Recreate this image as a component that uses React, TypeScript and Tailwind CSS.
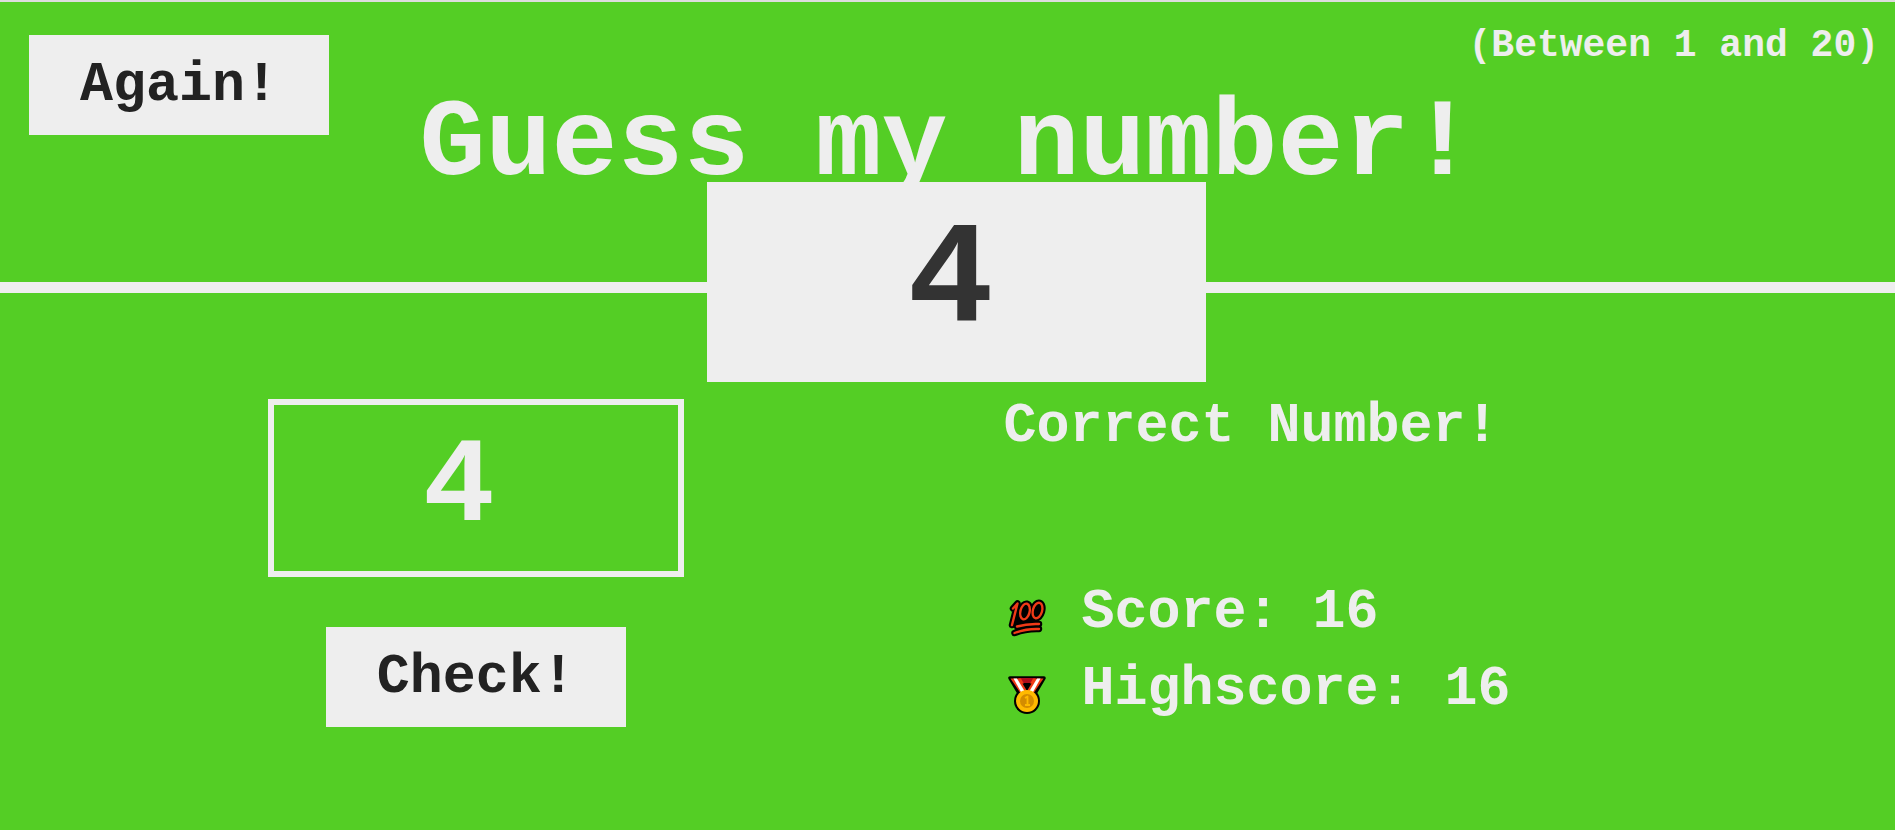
import { useState } from "react";

function HundredIcon() {
  const strokes = (
    <>
      <path d="M5 9.500 9.500 4.500 4 26" />
      <ellipse cx="17" cy="12.500" rx="4.600" ry="8" transform="rotate(14 17 12.500)" />
      <ellipse cx="29.500" cy="11.500" rx="4.600" ry="8" transform="rotate(16 29.500 11.500)" />
      <path d="M9 27.500 Q19 24.500 31 25" />
      <path d="M6.500 34 Q18 29.500 31 30" />
    </>
  );
  return (
    <svg viewBox="0 0 38 38" className="mt-[10px] h-[38px] w-[38px] shrink-0" fill="none" strokeLinecap="round" strokeLinejoin="round" aria-hidden="true">
      <path d="M8 8 28 6 27 24 6 26Z" fill="#000" />
      <g stroke="#000" strokeWidth="6.500" fill="#000">{strokes}</g>
      <g stroke="#f03a17" strokeWidth="2.400">{strokes}</g>
    </svg>
  );
}

function MedalIcon() {
  return (
    <svg viewBox="0 0 38 38" className="mt-[10px] h-[38px] w-[38px] shrink-0" strokeLinejoin="round" aria-hidden="true">
      <path d="M2 2H36L26 19H12Z" fill="#000" stroke="#000" strokeWidth="3.500" />
      <circle cx="19" cy="25" r="13" fill="#000" />
      <path d="M10 2H28L25 7H13Z" fill="#b00e1c" />
      <path d="M2.500 2.500H13L20 15 13 18Z" fill="#f03a17" />
      <path d="M35.500 2.500H25L18 15 25 18Z" fill="#f03a17" />
      <path d="M5.500 2.500H9L16.500 15 13.500 17Z" fill="#fff" />
      <path d="M32.500 2.500H29L21.500 15 24.500 17Z" fill="#fff" />
      <path d="M14.500 7.500H23.500L19 15Z" fill="#000" />
      <circle cx="19" cy="25" r="11" fill="#ffb900" />
      <circle cx="19" cy="25" r="7" fill="#d48c00" />
      <path d="M17 22 19.500 20.500V29M17 29H22" fill="none" stroke="#ffb900" strokeWidth="1.800" />
    </svg>
  );
}

const buttonClass =
  "h-[100px] w-[300px] cursor-pointer bg-[#eee] text-center text-[55px] leading-[55px] text-[#222] hover:bg-[#ccc]";

export default function App() {
  const [guess, setGuess] = useState("4");

  return (
    <div className="min-h-screen border-t-2 border-[#ddd] bg-[#54ce25] font-['Liberation_Mono',monospace] font-bold text-[#eee]">
      <header className="relative border-b-[11px] border-[#eee] pt-[23px] pb-[82px]">
        <div className="flex items-start justify-between pr-4 pl-[29px]">
          <button type="button" className={`${buttonClass} mt-[10px]`}>Again!</button>
          <p className="text-[38px] leading-[42px]">(Between 1 and 20)</p>
        </div>
        <h1 className="-mt-[45px] text-center text-[110px] leading-[110px] whitespace-nowrap">Guess my number!</h1>
        <div className="absolute inset-x-0 top-[180px] flex justify-center pl-[18px]">
          <div className="flex h-[200px] w-[499px] items-center justify-center bg-[#eee] pr-3 text-[144px] leading-[144px] text-[#333]">4</div>
        </div>
      </header>

      <main className="grid grid-cols-2 pt-[106px]">
        <section className="flex flex-col items-center gap-[50px] pl-1">
          <input
            type="text"
            inputMode="numeric"
            aria-label="Your guess"
            value={guess}
            onChange={(e) => setGuess(e.target.value)}
            className="h-[178px] w-[416px] border-[6px] border-[#eee] bg-transparent pr-[34px] text-center text-[120px] leading-[120px] outline-none"
          />
          <button type="button" className={buttonClass}>Check!</button>
        </section>

        <section className="pl-[56px] text-[55px] leading-[55px]">
          <p className="mb-[131px]">Correct Number!</p>
          <p className="mb-[22px] flex items-center gap-9 pl-1">
            <HundredIcon />
            <span>Score: <span>16</span></span>
          </p>
          <p className="flex items-center gap-9 pl-1">
            <MedalIcon />
            <span>Highscore: <span>16</span></span>
          </p>
        </section>
      </main>
    </div>
  );
}
